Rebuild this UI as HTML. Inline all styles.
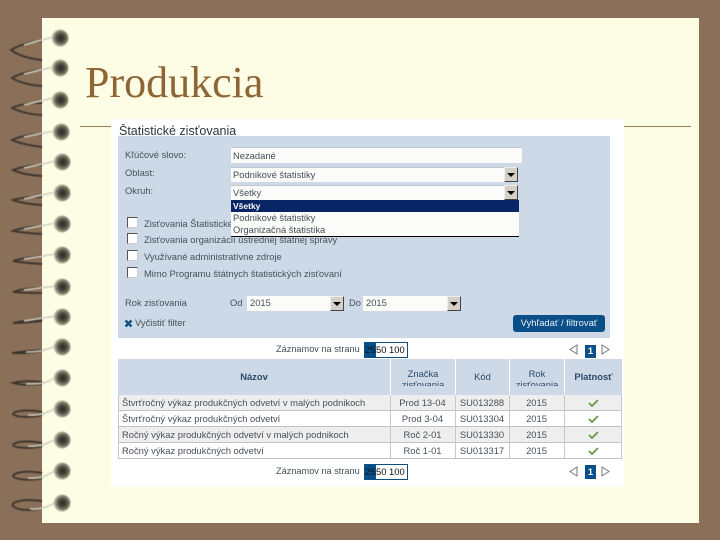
<!DOCTYPE html>
<html><head><meta charset="utf-8">
<style>
html,body{margin:0;padding:0}
body{width:720px;height:540px;overflow:hidden;background:#8a7059;position:relative;font-family:"Liberation Sans",sans-serif}
.a{position:absolute}
.t{position:absolute;font-size:9.4px;line-height:12px;color:#465059;white-space:nowrap;filter:blur(.35px)}
.inp{position:absolute;background:#fbfbfa;border-top:1px solid #bfc6d0;box-sizing:border-box}
.btn{position:absolute;width:14px;background:#d4d0c8;border:1px solid;border-color:#eee #444 #444 #eee;box-sizing:border-box}
.btn:after{content:"";position:absolute;left:2px;top:5px;border:4px solid transparent;border-top:4px solid #000;border-bottom:0}
.c{text-align:center}
.cb{position:absolute;width:11px;height:11px;background:#fff;border:1px solid;border-color:#555 #ccc #ccc #555;box-sizing:border-box}
.hd{position:absolute;background:#cdd9e6;overflow:hidden;top:359px;height:36px;color:#2c4a6b;font-size:9.4px;line-height:11px;text-align:center}
.hd div{height:18px;margin-top:9px;overflow:hidden;filter:blur(.3px)}
.rw{position:absolute;left:118px;width:504px;height:16px;box-sizing:border-box;border-bottom:1px solid #c2c2c2}
.v{position:absolute;width:1px;background:#c9c9c9;top:395px;height:64px}
</style></head><body>
<div class="a" style="left:42px;top:18px;width:657px;height:505px;background:#fdfce5"></div>
<div class="a" style="left:80px;top:126px;width:611px;height:1px;background:#9a7f5f"></div>
<div class="a" style="left:85px;top:58px;font:44px/50px 'Liberation Serif',serif;color:#8e6535">Produkcia</div>

<svg class="a" style="left:0;top:0;filter:blur(.45px)" width="80" height="540" viewBox="0 0 80 540">
<defs>
<radialGradient id="b" cx=".55" cy=".5" r=".55"><stop offset="0" stop-color="#2a2822"/><stop offset=".45" stop-color="#4f4d44"/><stop offset=".75" stop-color="#8f8c76"/><stop offset="1" stop-color="#e2e0c8"/></radialGradient>
</defs>
<g fill="none" stroke="#3a322b" stroke-width="1.8">
<path d="M42 41Q22 43 11 50Q22 58 42 60"/>
<path d="M42 70Q22 72 12 78Q24 85 42 86"/>
<path d="M42 103Q22 103 12 108Q24 114 42 115"/>
<path d="M42 134Q22 135 12 140Q24 145 42 147"/>
<path d="M42 165Q22 166 13 170Q24 175 42 176"/>
<path d="M42 197Q22 197 13 200Q24 204 42 205"/>
<path d="M42 226Q22 227 13 231Q24 233 42 234"/>
<path d="M42 256Q22 258 13 261Q24 263 42 264"/>
<path d="M42 288Q24 288 13 292Q24 293 42 293"/>
<path d="M42 320Q24 320 13 323Q24 323 42 321"/>
<path d="M42 350Q24 351 12 353Q24 354 42 351"/>
<path d="M42 382Q24 380 13 383Q24 386 42 384"/>
<path d="M42 412C20 408 10 413 14 415C20 418 36 417 42 415"/>
<path d="M42 443C20 439 10 444 14 446C20 449 36 448 42 446"/>
<path d="M42 473C20 469 10 475 14 477C20 481 36 480 42 478"/>
<path d="M42 501C20 498 10 503 13 506C18 511 36 511 42 508"/>
</g>
<g fill="none" stroke="#cfcfc0" stroke-width="1.6">
<path d="M24 45L53 37"/><path d="M24 74L53 67"/><path d="M24 105L53 98"/><path d="M24 137L54 131"/>
<path d="M24 168L56 161"/><path d="M24 199L56 192"/><path d="M24 229L56 223"/><path d="M24 259L56 254"/>
<path d="M24 290L56 286"/><path d="M24 321L56 316"/>
<path d="M26 352C40 352 46 350 56 346"/><path d="M26 384C40 384 46 384 56 377"/>
<path d="M28 415C42 416 48 412 56 408"/><path d="M28 446C42 447 48 443 56 439"/>
<path d="M28 478C42 479 48 475 56 470"/><path d="M30 509C42 510 50 506 56 502"/>
</g>
<g fill="url(#b)">
<circle cx="60" cy="38" r="8.5"/><circle cx="60" cy="68" r="8.5"/><circle cx="60" cy="100" r="8.5"/><circle cx="61" cy="132" r="8.5"/>
<circle cx="62" cy="162" r="8.5"/><circle cx="62" cy="193" r="8.5"/><circle cx="62" cy="224" r="8.5"/><circle cx="62" cy="255" r="8.5"/>
<circle cx="62" cy="287" r="8.5"/><circle cx="62" cy="317" r="8.5"/><circle cx="62" cy="347" r="8.5"/><circle cx="62" cy="378" r="8.5"/>
<circle cx="62" cy="409" r="8.5"/><circle cx="62" cy="440" r="8.5"/><circle cx="62" cy="471" r="8.5"/><circle cx="62" cy="503" r="8.5"/>
</g>
</svg>

<div class="a" style="left:111px;top:119px;width:513px;height:368px;background:#fff"></div>
<div class="a" style="left:119px;top:124px;height:12px;overflow:hidden;font-size:12.5px;line-height:15px;color:#2b3540;white-space:nowrap;filter:blur(.25px)">Štatistické zisťovania</div>
<div class="a" style="left:118px;top:136px;width:492px;height:202px;background:#cdd9e6"></div>

<div class="t" style="left:125px;top:149px">Kľúčové slovo:</div>
<div class="t" style="left:125px;top:167px">Oblast:</div>
<div class="t" style="left:125px;top:185px">Okruh:</div>
<div class="inp" style="left:231px;top:147px;width:291px;height:16px"></div>
<div class="t" style="left:233px;top:150px">Nezadané</div>
<div class="inp" style="left:231px;top:167px;width:286px;height:15px"></div>
<div class="t" style="left:233px;top:169px">Podnikové štatistiky</div>
<div class="btn" style="left:504px;top:167px;height:15px"></div>
<div class="inp" style="left:231px;top:185px;width:286px;height:15px"></div>
<div class="t" style="left:233px;top:187px">Všetky</div>
<div class="btn" style="left:504px;top:185px;height:15px"></div>

<div class="t" style="left:144px;top:218px">Zisťovania Štatistického úradu SR</div>
<div class="t" style="left:144px;top:234px">Zisťovania organizácií ústrednej štátnej správy</div>
<div class="t" style="left:144px;top:251px">Využívané administratívne zdroje</div>
<div class="t" style="left:144px;top:268px">Mimo Programu štátnych štatistických zisťovaní</div>
<div class="cb" style="left:127px;top:217px"></div>
<div class="cb" style="left:127px;top:233px"></div>
<div class="cb" style="left:127px;top:250px"></div>
<div class="cb" style="left:127px;top:267px"></div>

<div class="a" style="left:231px;top:200px;width:288px;height:37px;background:#fbfbfa;border-bottom:1px solid #000;box-sizing:border-box"></div>
<div class="a" style="left:231px;top:200px;width:288px;height:12px;background:#0a2566"></div>
<div class="t" style="left:233px;top:200px;color:#fff;font-weight:bold;font-size:8.5px">Všetky</div>
<div class="t" style="left:233px;top:212px">Podnikové štatistiky</div>
<div class="t" style="left:233px;top:224px">Organizačná štatistika</div>

<div class="t" style="left:125px;top:297px">Rok zisťovania</div>
<div class="t" style="left:230px;top:297px">Od</div>
<div class="inp" style="left:247px;top:296px;width:97px;height:15px;border:0"></div>
<div class="t" style="left:250px;top:297px">2015</div>
<div class="btn" style="left:330px;top:296px;height:15px"></div>
<div class="t" style="left:349px;top:297px">Do</div>
<div class="inp" style="left:363px;top:296px;width:98px;height:15px;border:0"></div>
<div class="t" style="left:366px;top:297px">2015</div>
<div class="btn" style="left:447px;top:296px;height:15px"></div>

<svg class="a" style="left:124px;top:319px" width="9" height="9" viewBox="0 0 9 9"><path d="M1.5 1.5L7.5 7.5M7.5 1.5L1.5 7.5" stroke="#124f86" stroke-width="2.4"/></svg>
<div class="t" style="left:135px;top:317px">Vyčistiť filter</div>
<div class="a" style="left:513px;top:315px;width:92px;height:17px;background:#0b4f88;border-radius:3px"></div>
<div class="t c" style="left:513px;top:317px;width:92px;color:#e8f0f6">Vyhľadať / filtrovať</div>

<div class="t" style="left:276px;top:343px;font-size:9.2px">Záznamov na stranu</div>
<div class="a" style="left:364px;top:342px;width:44px;height:16px;background:#fff;border:1px solid #0b4f88;box-sizing:border-box"></div>
<div class="a" style="left:364px;top:342px;width:12px;height:16px;background:#0b4f88"></div>
<div class="t" style="left:365px;top:344px;color:#111">25</div>
<div class="t" style="left:376px;top:344px;color:#111">50 100</div>
<svg class="a" style="left:568px;top:343px" width="42" height="15" viewBox="0 0 42 15"><path d="M9 2V11L2 6.5Z" fill="#fff" stroke="#777"/><path d="M34 2V11L41 6.5Z" fill="#fff" stroke="#777"/><rect x="17" y="2" width="11" height="13" fill="#0b4f88"/></svg>
<div class="t c" style="left:585px;top:345px;width:11px;color:#fff;font-weight:bold">1</div>

<div class="hd" style="left:118px;width:272px;line-height:36px;font-weight:bold">Názov</div>
<div class="hd" style="left:391px;width:64px"><div>Značka<br>zisťovania</div></div>
<div class="hd" style="left:456px;width:53px;line-height:36px">Kód</div>
<div class="hd" style="left:510px;width:54px"><div>Rok<br>zisťovania</div></div>
<div class="hd" style="left:565px;width:57px;line-height:36px;font-weight:bold">Platnosť</div>

<div class="rw" style="top:395px;background:#eee"></div>
<div class="rw" style="top:411px;background:#fff"></div>
<div class="rw" style="top:427px;background:#eee"></div>
<div class="rw" style="top:443px;background:#fff"></div>
<div class="v" style="left:118px"></div><div class="v" style="left:390px"></div><div class="v" style="left:455px"></div><div class="v" style="left:509px"></div><div class="v" style="left:564px"></div><div class="v" style="left:621px"></div>

<div class="t" style="left:122px;top:397px">Štvrťročný výkaz produkčných odvetví v malých podnikoch</div>
<div class="t" style="left:122px;top:413px">Štvrťročný výkaz produkčných odvetví</div>
<div class="t" style="left:122px;top:429px">Ročný výkaz produkčných odvetví v malých podnikoch</div>
<div class="t" style="left:122px;top:445px">Ročný výkaz produkčných odvetví</div>

<div class="t c" style="left:390px;top:397px;width:65px">Prod 13-04</div>
<div class="t c" style="left:390px;top:413px;width:65px">Prod 3-04</div>
<div class="t c" style="left:390px;top:429px;width:65px">Roč 2-01</div>
<div class="t c" style="left:390px;top:445px;width:65px">Roč 1-01</div>
<div class="t c" style="left:455px;top:397px;width:54px">SU013288</div>
<div class="t c" style="left:455px;top:413px;width:54px">SU013304</div>
<div class="t c" style="left:455px;top:429px;width:54px">SU013330</div>
<div class="t c" style="left:455px;top:445px;width:54px">SU013317</div>
<div class="t c" style="left:509px;top:397px;width:55px">2015</div>
<div class="t c" style="left:509px;top:413px;width:55px">2015</div>
<div class="t c" style="left:509px;top:429px;width:55px">2015</div>
<div class="t c" style="left:509px;top:445px;width:55px">2015</div>
<svg class="a" style="left:588px;top:398px" width="11" height="60" viewBox="0 0 11 60"><g fill="none" stroke="#5f9a3c" stroke-width="1.7"><path d="M1 5L4 8L10 2"/><path d="M1 21L4 24L10 18"/><path d="M1 37L4 40L10 34"/><path d="M1 53L4 56L10 50"/></g></svg>

<div class="t" style="left:276px;top:465px;font-size:9.2px">Záznamov na stranu</div>
<div class="a" style="left:364px;top:464px;width:44px;height:16px;background:#fff;border:1px solid #0b4f88;box-sizing:border-box"></div>
<div class="a" style="left:364px;top:464px;width:12px;height:16px;background:#0b4f88"></div>
<div class="t" style="left:365px;top:466px;color:#111">25</div>
<div class="t" style="left:376px;top:466px;color:#111">50 100</div>
<svg class="a" style="left:568px;top:465px" width="42" height="15" viewBox="0 0 42 15"><path d="M9 2V11L2 6.5Z" fill="#fff" stroke="#777"/><path d="M34 2V11L41 6.5Z" fill="#fff" stroke="#777"/><rect x="17" y="0" width="11" height="14" fill="#0b4f88"/></svg>
<div class="t c" style="left:585px;top:466px;width:11px;color:#fff;font-weight:bold">1</div>
</body></html>
